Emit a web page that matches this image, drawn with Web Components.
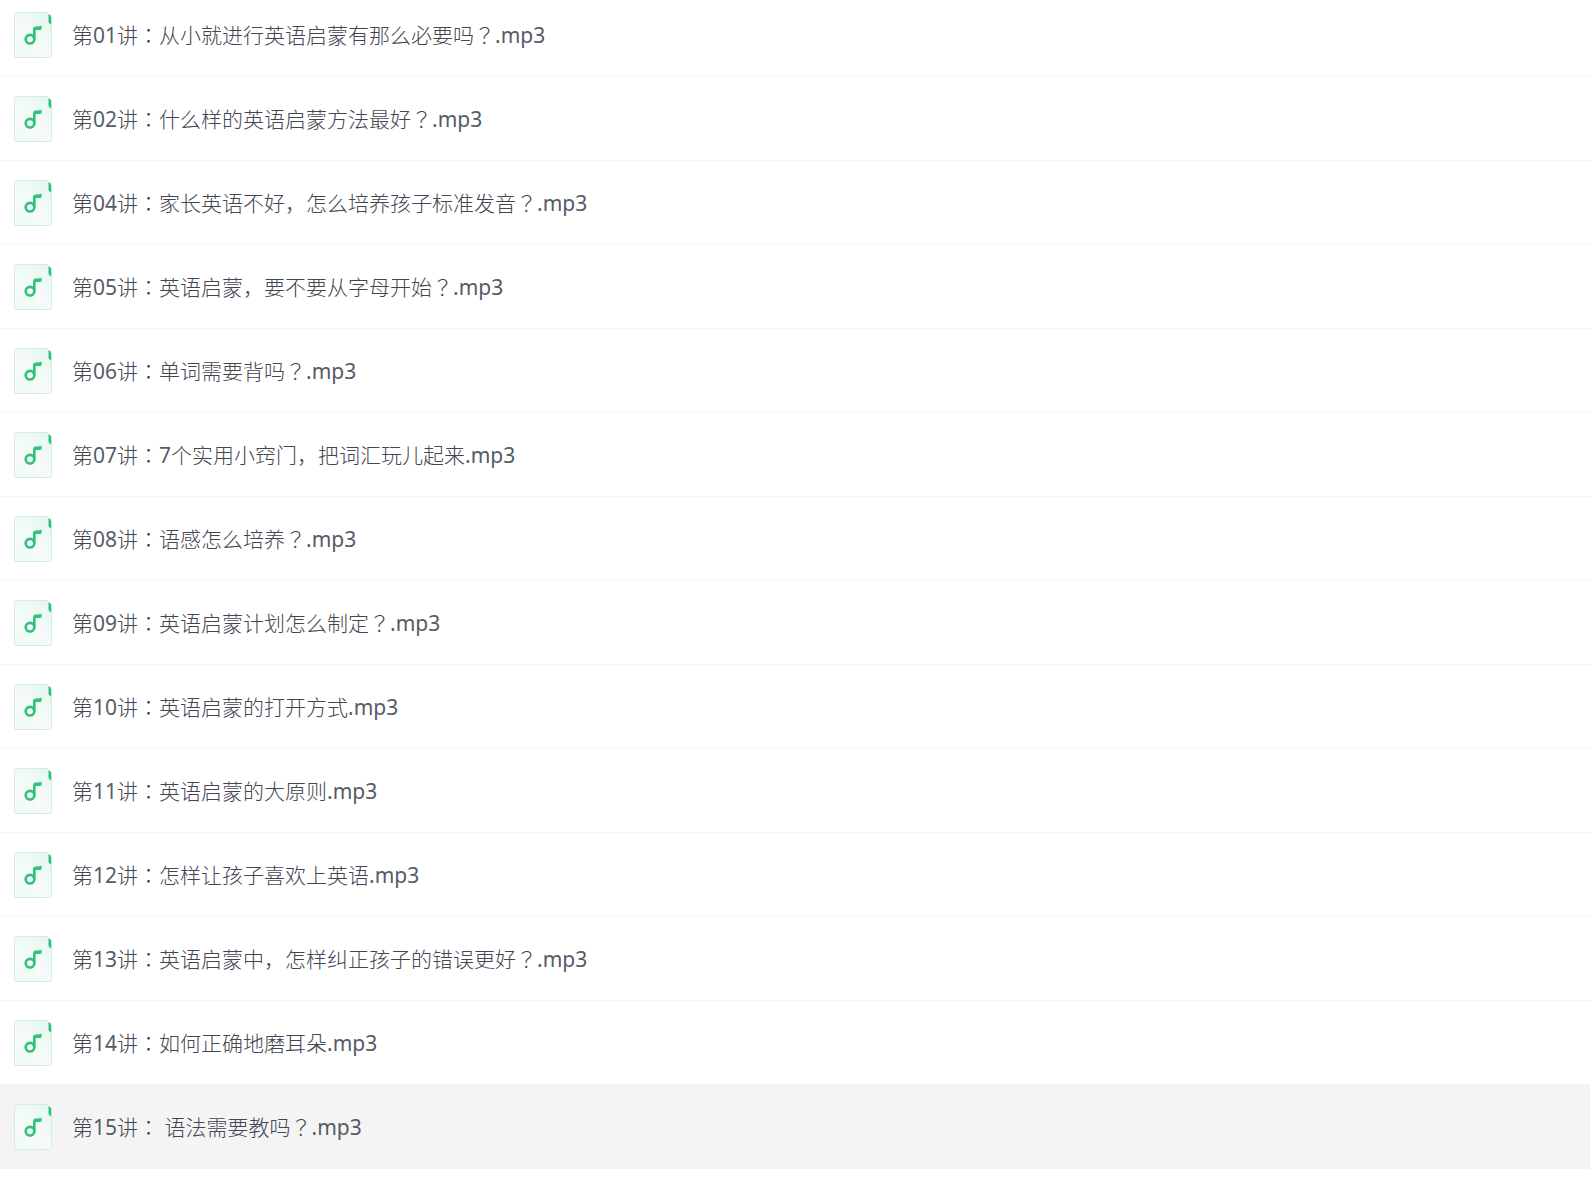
<!DOCTYPE html>
<html lang="zh-CN">
<head>
<meta charset="utf-8">
<title>MP3</title>
<style>
html, body { margin: 0; background: #fff; }
body { overflow-x: hidden; }
</style>
</head>
<body>
<file-list>
<file-row>第01讲：从小就进行英语启蒙有那么必要吗？.mp3</file-row>
<file-row>第02讲：什么样的英语启蒙方法最好？.mp3</file-row>
<file-row>第04讲：家长英语不好，怎么培养孩子标准发音？.mp3</file-row>
<file-row>第05讲：英语启蒙，要不要从字母开始？.mp3</file-row>
<file-row>第06讲：单词需要背吗？.mp3</file-row>
<file-row>第07讲：7个实用小窍门，把词汇玩儿起来.mp3</file-row>
<file-row>第08讲：语感怎么培养？.mp3</file-row>
<file-row>第09讲：英语启蒙计划怎么制定？.mp3</file-row>
<file-row>第10讲：英语启蒙的打开方式.mp3</file-row>
<file-row>第11讲：英语启蒙的大原则.mp3</file-row>
<file-row>第12讲：怎样让孩子喜欢上英语.mp3</file-row>
<file-row>第13讲：英语启蒙中，怎样纠正孩子的错误更好？.mp3</file-row>
<file-row>第14讲：如何正确地磨耳朵.mp3</file-row>
<file-row active>第15讲： 语法需要教吗？.mp3</file-row>
</file-list>

<template id="icon-template">
<style>
:host { display: block; flex: none; width: 38px; height: 46px; }
svg { display: block; }
</style>
<svg width="38" height="46" viewBox="0 0 38 46" aria-hidden="true">
<defs><linearGradient id="paper" x1="1" y1="0" x2="0.3" y2="1"><stop offset="0" stop-color="#e4f6ee"/><stop offset="0.6" stop-color="#f5fbf9"/><stop offset="1" stop-color="#f1faf6"/></linearGradient></defs>
<path d="M2.5 .5H33.2Q34.5 .8 34.5 2.5V9.5Q34.7 11.5 37.5 12V43.5Q37.5 45.5 35.5 45.5H2.5Q.5 45.5 .5 43.5V2.5Q.5 .5 2.5 .5Z" fill="url(#paper)" stroke="#d3eee1"/>
<path d="M34.8 2.6Q37.1 3.2 37.1 5.5V11.8H36.5Q34.8 11.6 34.8 9.5Z" fill="#2fc278" stroke="#2fc278" stroke-width=".4"/>
<circle cx="16" cy="27.2" r="4.3" fill="none" stroke="#2fc278" stroke-width="2.6"/>
<path d="M19 27.5V17.5Q19 14.4 22 14.4Q25 14.6 27.6 13.8V17.4Q25 18.2 22 18Q21.6 18 21.6 18.8V27.5Z" fill="#2fc278"/>
</svg>
</template>

<template id="row-template">
<style>
:host { display: flex; align-items: center; gap: 20px; box-sizing: border-box; min-height: 84px; padding: 0 14px; border-bottom: 1px solid #f4f5f6; }
:host([active]) { background: #f4f4f4; border-color: #f4f4f4; }
a { color: #434651; text-decoration: none; line-height: 30px; }
.mark { font-family: "Noto Sans CJK TC", sans-serif; }
.latin { font-weight: 400; color: #585b66; }
</style>
<file-icon></file-icon>
<a href="#"></a>
</template>

<script>
customElements.define('file-icon', class extends HTMLElement {
  constructor() {
    super();
    this.attachShadow({ mode: 'open' }).append(document.getElementById('icon-template').content.cloneNode(true));
  }
});

customElements.define('file-row', class extends HTMLElement {
  connectedCallback() {
    if (this.shadowRoot) return;
    const root = this.attachShadow({ mode: 'open' });
    root.append(document.getElementById('row-template').content.cloneNode(true));
    const link = root.querySelector('a');
    // Colons and question marks use the face that centres them in the em box;
    // digits and the extension are set in the regular weight.
    for (const part of this.textContent.split(/([：？]|[.\w]+)/)) {
      if (/^[：？.\w]/.test(part)) {
        const run = document.createElement('span');
        run.className = /^[：？]/.test(part) ? 'mark' : 'latin';
        if (run.className === 'mark') run.lang = 'zh-TW';
        run.textContent = part;
        link.append(run);
      } else {
        link.append(part);
      }
    }
  }
});

customElements.define('file-list', class extends HTMLElement {
  constructor() {
    super();
    this.attachShadow({ mode: 'open' }).innerHTML = `
<style>
:host { display: flex; flex-direction: column; margin-top: -7px; font: 300 21px "Noto Sans", "Noto Sans CJK SC", sans-serif; }
</style>
<slot></slot>`;
  }
});
</script>
</body>
</html>
